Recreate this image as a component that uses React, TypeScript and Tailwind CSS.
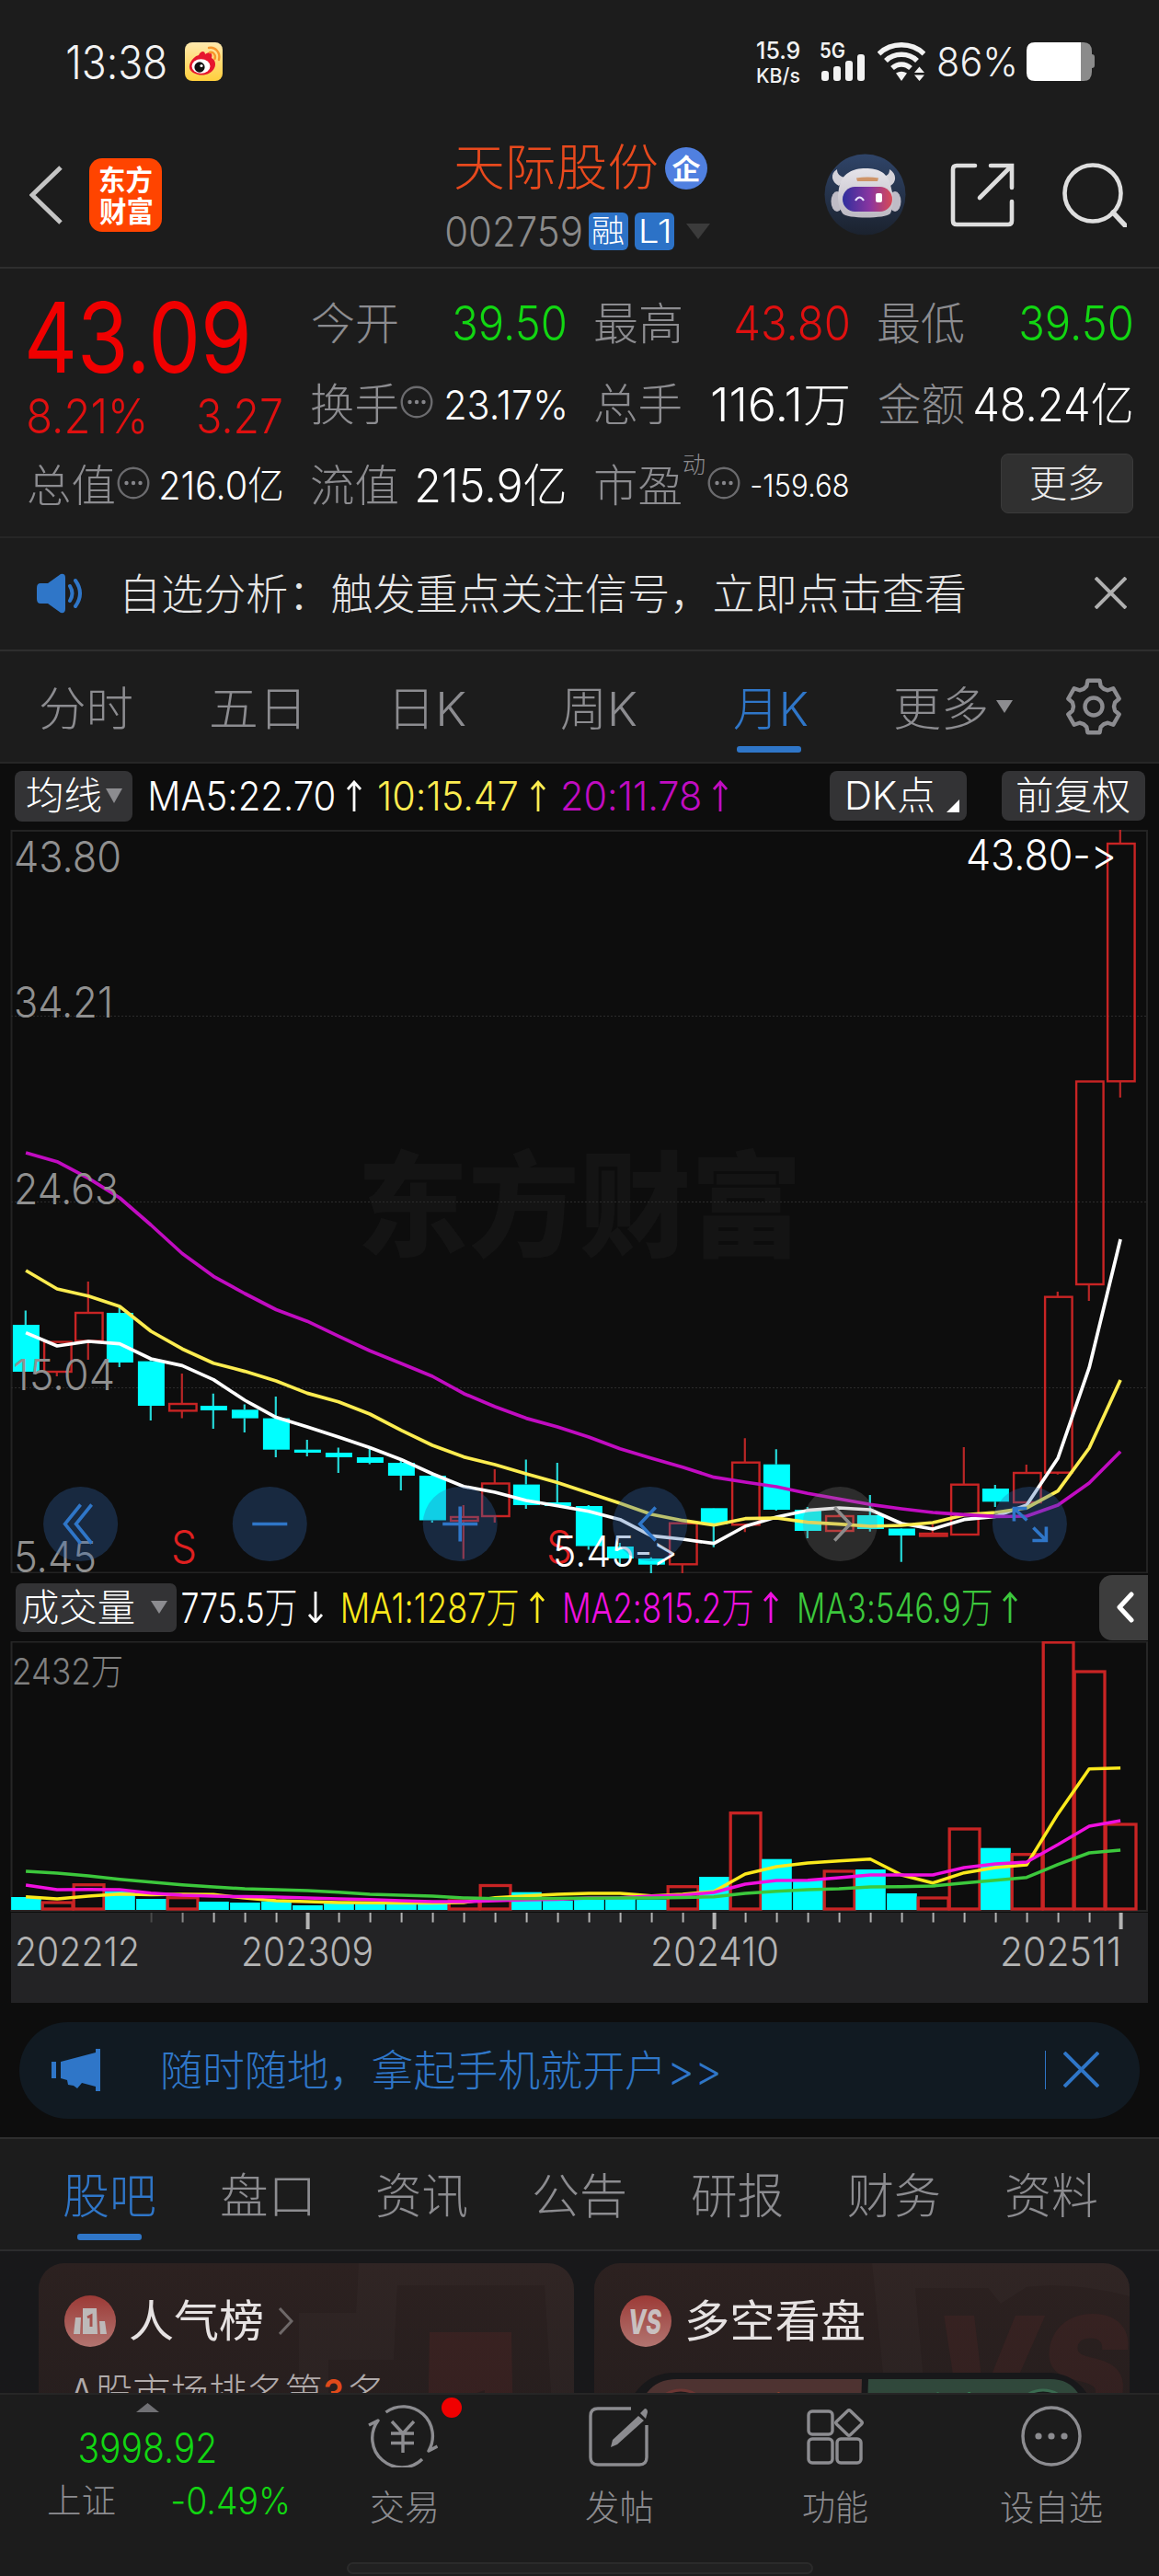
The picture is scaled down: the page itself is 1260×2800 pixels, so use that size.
import React, { useLayoutEffect, useRef, useState } from "react";

const FONT = "font-['Inter','Noto_Sans_CJK_SC',sans-serif]";

/* Text whose ink is stretched to fill the width of its box. */
function Fit({ className = "", children }: { className?: string; children: string }) {
  const ref = useRef<HTMLDivElement>(null);
  const [transform, setTransform] = useState("none");
  useLayoutEffect(() => {
    const el = ref.current;
    const ctx = document.createElement("canvas").getContext("2d");
    if (!el || !ctx) return;
    const cs = getComputedStyle(el);
    ctx.font = `${cs.fontStyle} ${cs.fontWeight} ${cs.fontSize} ${cs.fontFamily}`;
    const m = ctx.measureText(children);
    const ink = m.actualBoundingBoxLeft + m.actualBoundingBoxRight;
    const s = el.clientWidth / ink;
    setTransform(`translateX(${m.actualBoundingBoxLeft * s}px) scaleX(${s})`);
  }, [children]);
  return (
    <div ref={ref} className={`shrink-0 whitespace-nowrap leading-none ${className}`}>
      <span className="inline-block origin-left" style={{ transform }}>{children}</span>
    </div>
  );
}

function Dots() {
  return (
    <svg viewBox="0 0 36 36" className="h-9 w-9 shrink-0" fill="none" stroke="#6b6b6e" strokeWidth="2.4">
      <circle cx="18" cy="18" r="16.3" />
      <g fill="#85858a" stroke="none"><circle cx="10.5" cy="18" r="2.2" /><circle cx="18" cy="18" r="2.2" /><circle cx="25.5" cy="18" r="2.2" /></g>
    </svg>
  );
}

function StatusBar() {
  return (
    <div className="flex h-[134px] items-center text-[#f2f2f2]">
      <Fit className="ml-[73px] mt-[2px] w-[107px] text-[50px] font-[360]">13:38</Fit>
      <svg viewBox="0 0 41 42" className="ml-[21px] h-[42px] w-[41px]">
        <defs><linearGradient id="wb" x1="0" y1="0" x2="0" y2="1"><stop offset="0" stopColor="#ffe9ae" /><stop offset="1" stopColor="#ffcf3c" /></linearGradient></defs>
        <rect width="41" height="42" rx="8" fill="url(#wb)" />
        <path d="M15 14 C17 9 22 9 22 13 C26 10 31 11 29 17 C33 19 34 24 32 28 C29 34 21 37 14 35 C6 33 3 28 6 22 C8 18 11 15 15 14Z" fill="#e6162d" />
        <ellipse cx="17.5" cy="26" rx="10" ry="7.8" fill="#fff" />
        <ellipse cx="16" cy="27" rx="5.6" ry="5.8" fill="#111" />
        <circle cx="18" cy="25.5" r="1.6" fill="#fff" />
        <path d="M27 11 C31 10 34 14 32.5 18 M26 6 C33 4.500 39 11 37 19" fill="none" stroke="#f7952b" strokeWidth="2.4" strokeLinecap="round" />
      </svg>
      <div className="ml-auto flex w-[47px] flex-col gap-[3px] font-medium">
        <Fit className="w-[46px] text-[26px]">15.9</Fit>
        <Fit className="w-[46px] text-[22px]">KB/s</Fit>
      </div>
      <div className="ml-[21px] h-[42px] w-[52px]">
        <svg viewBox="0 0 52 42" className="h-[42px] w-[52px]" fill="#f2f2f2">
          <text x="0" y="17" fontSize="23" fontWeight="600" textLength="28" lengthAdjust="spacingAndGlyphs">5G</text>
          <rect x="2" y="31" width="8" height="11" rx="3" /><rect x="15" y="26" width="8" height="16" rx="3" /><rect x="28" y="20" width="8" height="22" rx="3" /><rect x="41" y="13" width="8" height="29" rx="3" />
        </svg>
      </div>
      <svg viewBox="0 0 52 42" className="ml-[11px] h-[42px] w-[52px]" fill="none" stroke="#f2f2f2" strokeWidth="5.500">
        <path d="M1.500 12.500 C15 -0.500 37 -0.500 50.500 12.500" />
        <path d="M9 20 C18 11 34 11 43 20" />
        <path d="M16 28 C22 22.500 30 22.500 36 28" />
        <path d="M20 33.500 Q26 30 32 33.500 L26 42Z" fill="#f2f2f2" stroke="none" />
        <path d="M40 33 L45.500 26.500 L51 33Z M40 35.500 L51 35.500 L45.500 42Z" fill="#f2f2f2" stroke="none" />
      </svg>
      <Fit className="ml-[14px] w-[83px] text-[44px] font-[360]">86%</Fit>
      <svg viewBox="0 0 74 42" className="ml-[13px] mr-[70px] h-[42px] w-[74px]">
        <path d="M58 0H62Q71 0 71 10V13Q74 13 74 16V25Q74 28 71 28V32Q71 42 62 42H58Z" fill="#8b8b8b" />
        <path d="M9 0H59V42H9Q0 42 0 33V9Q0 0 9 0Z" fill="#fff" />
      </svg>
    </div>
  );
}

function Robot() {
  return (
    <svg viewBox="11 7 89 89" className="h-[89px] w-[89px] shrink-0">
      <defs>
        <linearGradient id="sky" x1="0" y1="0" x2="0" y2="1"><stop offset="0" stopColor="#2f4468" /><stop offset="1" stopColor="#1b222e" /></linearGradient>
        <linearGradient id="visor" x1="0" y1="0" x2="1" y2="0"><stop offset="0" stopColor="#2f2f9d" /><stop offset=".55" stopColor="#8a35a0" /><stop offset="1" stopColor="#d84a55" /></linearGradient>
        <linearGradient id="shell" x1="0" y1="0" x2="0" y2="1"><stop offset="0" stopColor="#e6e4ea" /><stop offset="1" stopColor="#bcb9c2" /></linearGradient>
      </defs>
      <circle cx="55.500" cy="51.500" r="44" fill="url(#sky)" />
      <path d="M25 24 C17 29 19 38 27 42 L34 33 C28 32 25 29 25 24Z M82 24 C90 29 90 38 83 42 L75 32 C80 31 82 29 82 24Z" fill="#d5d3da" />
      <ellipse cx="25" cy="59" rx="6.500" ry="11" fill="#bfbcc6" /><ellipse cx="88" cy="59" rx="6.500" ry="11" fill="#bfbcc6" />
      <path d="M27 45 C30 28 42 23 56 23 C70 23 81 27 84 45 C87 55 86 66 83 72 C78 78 35 78 31 72 C26 64 25 55 27 45Z" fill="url(#shell)" />
      <rect x="31" y="43" width="54" height="27" rx="13.500" fill="url(#visor)" />
      <path d="M46 33.500 Q58 31.500 70 33.500 L69 37 H47Z" fill="#cf9468" />
      <path d="M45 58 Q49.500 51 54 58" fill="none" stroke="#e9e3ff" strokeWidth="2.200" />
      <rect x="67" y="50" width="7" height="10" rx="2" fill="#fff" />
    </svg>
  );
}

function Header() {
  return (
    <div className="flex h-[156px] items-start">
      <svg viewBox="0 0 36 64" className="ml-[32px] mt-[46px] h-[64px] w-[36px]" fill="none" stroke="#c4c4c4" strokeWidth="5"><path d="M34 2 L3 32 L34 62" /></svg>
      <div className="ml-[29px] mt-[38px] flex h-[80px] w-[79px] flex-col items-center justify-center gap-[3px] rounded-[14px] bg-[#ff4400] font-bold text-white">
        <Fit className="w-[57px] text-[31px]">东方</Fit>
        <Fit className="w-[57px] text-[31px]">财富</Fit>
      </div>
      <div className="ml-[309px] mt-[24px] flex w-[290px] flex-col">
        <div className="flex h-[50px] items-center">
          <Fit className="ml-[10px] w-[219px] text-[54px] font-light text-[#e8491d]">天际股份</Fit>
          <div className="ml-[9px] flex h-[46px] w-[46px] items-center justify-center rounded-full bg-[#5080e0] text-[31px] font-bold leading-none text-white">企</div>
        </div>
        <div className="mt-[22px] flex h-[42px] items-center">
          <Fit className="w-[147px] text-[45px] font-light text-[#8a8a8a]">002759</Fit>
          <div className="ml-[8px] flex h-[41px] w-[43px] items-center justify-center rounded-[6px] bg-[#2c72c7]"><Fit className="w-[33px] text-[34px] font-light text-white">融</Fit></div>
          <div className="ml-[7px] flex h-[41px] w-[43px] items-center justify-center rounded-[6px] bg-[#2c72c7]"><Fit className="w-[30px] text-[36px] font-light text-white">L1</Fit></div>
          <svg viewBox="0 0 26 17" className="ml-[13px] h-[17px] w-[26px]"><path d="M0 0H26L13 17Z" fill="#3b3b3b" /></svg>
        </div>
      </div>
      <div className="ml-auto mr-[35px] mt-[33px] flex h-[89px] items-center">
        <Robot />
        <svg viewBox="0 0 70 70" className="ml-[48px] h-[70px] w-[70px]" fill="none" stroke="#dedede" strokeWidth="4.600">
          <path d="M27 3H7Q3 3 3 7V63Q3 67 7 67H63Q67 67 67 63V42" strokeLinecap="round" /><path d="M44 3H67V27 M66 4L32 38" strokeLinecap="round" />
        </svg>
        <svg viewBox="0 0 70 70" className="ml-[52px] h-[70px] w-[70px]" fill="none" stroke="#dedede" strokeWidth="4.600">
          <circle cx="33" cy="33" r="30.500" /><path d="M55 54L68 68" strokeWidth="5.500" strokeLinecap="round" />
        </svg>
      </div>
    </div>
  );
}

const LABEL = "w-[93px] text-[48px] font-light text-[#8c8c90]";
const RED = "text-[#e01010]";
const GREEN = "text-[#12d612]";

function Cell({ children }: { children: React.ReactNode }) {
  return <div className="flex items-center">{children}</div>;
}

function Quote() {
  return (
    <div className="h-[293px] border-t-2 border-[#2e2e2e] pl-[31px] pr-[30px] pt-[16px]">
      <div className="grid grid-cols-4 grid-rows-[88px_88px_88px] gap-x-[33px]">
        <div className="row-span-2 flex flex-col">
          <div className="flex h-[117px] items-center"><Fit className="w-[238px] text-[106px] font-[430] text-[#f00000]">43.09</Fit></div>
          <div className="flex h-[55px] items-center justify-between"><Fit className={`w-[126px] text-[52px] font-light ${RED}`}>8.21%</Fit><Fit className={`w-[90px] text-[52px] font-light ${RED}`}>3.27</Fit></div>
        </div>
        <Cell><Fit className={LABEL}>今开</Fit><Fit className={`ml-auto w-[120px] text-[52px] font-light ${GREEN}`}>39.50</Fit></Cell>
        <Cell><Fit className={LABEL}>最高</Fit><Fit className={`ml-auto w-[122px] text-[52px] font-light ${RED}`}>43.80</Fit></Cell>
        <Cell><Fit className={LABEL}>最低</Fit><Fit className={`ml-auto w-[120px] text-[52px] font-light ${GREEN}`}>39.50</Fit></Cell>
        <Cell><Fit className={LABEL}>换手</Fit><div className="ml-[3px] -mt-[6px]"><Dots /></div><Fit className="ml-auto w-[129px] text-[44px] font-light text-white">23.17%</Fit></Cell>
        <Cell><Fit className={LABEL}>总手</Fit><Fit className="ml-auto w-[148px] text-[50px] font-light text-white">116.1万</Fit></Cell>
        <Cell><Fit className={LABEL}>金额</Fit><Fit className="ml-auto w-[170px] text-[50px] font-light text-white">48.24亿</Fit></Cell>
        <Cell><Fit className={LABEL}>总值</Fit><div className="ml-[3px] -mt-[6px]"><Dots /></div><Fit className="ml-auto w-[131px] text-[42px] font-light text-white">216.0亿</Fit></Cell>
        <Cell><Fit className={LABEL}>流值</Fit><Fit className="ml-auto w-[160px] text-[50px] font-light text-white">215.9亿</Fit></Cell>
        <Cell><Fit className={LABEL}>市盈</Fit><Fit className="ml-[3px] -mt-[46px] w-[23px] text-[25px] font-light text-[#8c8c90]">动</Fit><div className="ml-[3px] -mt-[6px]"><Dots /></div><Fit className="ml-auto w-[105px] text-[34px] font-light text-white">-159.68</Fit></Cell>
        <div className="-mr-[2px] flex items-center justify-end pb-[5px]">
          <div className="flex h-[65px] w-[144px] items-center justify-center rounded-[8px] border border-[#3a3a3a] bg-[#303030]"><Fit className="w-[78px] text-[41px] font-light text-[#ececec]">更多</Fit></div>
        </div>
      </div>
    </div>
  );
}

function Notice() {
  return (
    <div className="flex h-[123px] items-center border-t-2 border-[#262626] pb-[2px]">
      <svg viewBox="0 0 52 44" className="ml-[40px] h-[44px] w-[52px]" fill="#2f76c8">
        <path d="M4 11H12L26 1Q31 0 31 5V39Q31 44 26 43L12 33H4Q0 33 0 28V16Q0 11 4 11Z" />
        <path d="M36 14Q41 22 36 30 M42 8Q52 22 42 36" fill="none" stroke="#2f76c8" strokeWidth="4" strokeLinecap="round" />
      </svg>
      <Fit className="ml-[45px] w-[912px] text-[46px] font-light text-[#e6e6e6]">自选分析：触发重点关注信号，立即点击查看</Fit>
      <svg viewBox="0 0 35 35" className="ml-auto mr-[35px] h-[35px] w-[35px]" stroke="#b0b0b0" strokeWidth="4"><path d="M1 1L34 34M34 1L1 34" /></svg>
    </div>
  );
}

function gearPath() {
  const p: string[] = [];
  for (let k = 0; k < 6; k++) {
    for (const [da, r] of [[-19, 23.5], [-13, 29], [13, 29], [19, 23.5], [30, 22]]) {
      const a = ((-90 + 60 * k + da) * Math.PI) / 180;
      p.push(`${(31 + r * Math.cos(a)).toFixed(1)},${(31 + r * Math.sin(a)).toFixed(1)}`);
    }
  }
  return p.join(" ");
}

function PeriodTabs() {
  const c = "text-[51px] font-light text-[#8c8c90]";
  return (
    <div className="flex h-[122px] items-start border-t-2 border-[#2e2e2e] pt-[37px]">
      <Fit className={`ml-[44px] w-[99px] ${c}`}>分时</Fit>
      <Fit className={`ml-[86px] w-[96px] ${c}`}>五日</Fit>
      <Fit className={`ml-[105px] w-[76px] ${c}`}>日K</Fit>
      <Fit className={`ml-[104px] w-[82px] ${c}`}>周K</Fit>
      <div className="ml-[106px] flex w-[80px] flex-col items-center">
        <Fit className="w-[80px] text-[51px] font-light text-[#2f76c8]">月K</Fit>
        <div className="mr-[4px] mt-[15px] h-[7px] w-[70px] rounded-[3px] bg-[#2f76c8]" />
      </div>
      <Fit className={`ml-[95px] w-[99px] ${c}`}>更多</Fit>
      <svg viewBox="0 0 18 14" className="ml-[11px] mt-[16px] h-[14px] w-[18px]"><path d="M0 0H18L9 14Z" fill="#8c8c90" /></svg>
      <svg viewBox="0 0 62 62" className="-mt-[8px] ml-[57px] h-[62px] w-[62px]" fill="none" stroke="#8c8c90" strokeWidth="4.400" strokeLinejoin="round">
        <polygon points={gearPath()} /><circle cx="31" cy="31" r="9.500" />
      </svg>
    </div>
  );
}

function Arrow({ className, down }: { className: string; down?: boolean }) {
  return (
    <svg viewBox="0 0 18 34" className={`h-[34px] w-[18px] shrink-0 ${className}`} fill="none" stroke="currentColor" strokeWidth="2.800">
      <path d={down ? "M9 0V33M2 25L9 33L16 25" : "M9 34V2M2 10L9 2L16 10"} />
    </svg>
  );
}

function MaRow() {
  return (
    <div className="flex h-[74px] items-center border-t-2 border-[#262626] bg-[#0d0d0d] pb-[2px]">
      <div className="ml-[16px] flex h-[55px] w-[128px] items-center rounded-[8px] bg-[#333335]">
        <Fit className="ml-[13px] w-[81px] text-[42px] font-light text-white">均线</Fit>
        <svg viewBox="0 0 18 16" className="ml-[5px] h-[16px] w-[18px]"><path d="M0 0H18L9 16Z" fill="#8c8c90" /></svg>
      </div>
      <Fit className="ml-[20px] w-[199px] text-[43px] font-light text-white">MA5:22.70</Fit>
      <Arrow className="ml-[13px] text-white" />
      <Fit className="ml-[18px] w-[150px] text-[43px] font-light text-[#fcec50]">10:15.47</Fit>
      <Arrow className="ml-[14px] text-[#fcec50]" />
      <Fit className="ml-[18px] w-[149px] text-[43px] font-light text-[#c10cc1]">20:11.78</Fit>
      <Arrow className="ml-[13px] text-[#c10cc1]" />
      <div className="ml-auto flex h-[54px] w-[149px] items-center rounded-[8px] bg-[#333335]">
        <Fit className="ml-[20px] w-[93px] text-[42px] font-light text-white">DK点</Fit>
        <svg viewBox="0 0 14 14" className="ml-[14px] mt-[22px] h-[14px] w-[14px]"><path d="M14 0V14H0Z" fill="#fff" /></svg>
      </div>
      <div className="ml-[38px] mr-[15px] flex h-[54px] w-[156px] items-center justify-center rounded-[8px] bg-[#333335]">
        <Fit className="w-[122px] text-[42px] font-light text-white">前复权</Fit>
      </div>
    </div>
  );
}

const X0 = 28.1;
const STEP = 34;
const cx = (i: number) => X0 + i * STEP;

/* rising?, wick top, body top, body bottom, wick bottom */
const CANDLES: [number, number, number, number, number][] = [
  [0, 1424.5, 1440, 1491, 1491], [1, 1458.6, 1458.6, 1491, 1496], [1, 1393, 1427, 1457.6, 1478], [0, 1421, 1427, 1481, 1486],
  [0, 1477, 1479.6, 1528, 1544], [1, 1493, 1526, 1533.4, 1541.6], [0, 1514.7, 1528, 1533, 1553], [0, 1526.5, 1532.3, 1541.6, 1557],
  [0, 1518, 1541.6, 1575.7, 1584], [0, 1565, 1575.7, 1579, 1583], [0, 1573.6, 1579, 1584, 1601], [0, 1572.6, 1584, 1590, 1591.5],
  [0, 1588, 1590, 1604, 1620], [0, 1600, 1604, 1652.5, 1655], [1, 1636, 1649, 1653, 1694.5], [1, 1597, 1612.5, 1648, 1655],
  [0, 1586.4, 1613.6, 1636, 1640], [0, 1590, 1633, 1637, 1637], [0, 1636, 1637, 1680.5, 1684.5], [0, 1677, 1681, 1694, 1703],
  [0, 1692.7, 1694, 1700.7, 1710], [1, 1655.7, 1655.7, 1700.3, 1711], [0, 1639, 1639.3, 1656.7, 1681.7], [1, 1563.3, 1589.7, 1657.3, 1665.3],
  [0, 1575.3, 1591.7, 1641, 1642], [0, 1638, 1641, 1664, 1672], [1, 1646, 1648, 1664, 1664], [0, 1625, 1647, 1662, 1664.7],
  [0, 1661, 1661.5, 1669, 1697.7], [1, 1656.7, 1667, 1669.5, 1670], [1, 1573, 1613.7, 1668, 1668], [0, 1614, 1618, 1632.3, 1638],
  [1, 1592, 1601, 1633, 1633], [1, 1404, 1409.7, 1600.7, 1602.7], [1, 1175.5, 1175.5, 1396, 1414], [1, 902, 917, 1175.300, 1193],
];
const MA5 = [1448.6, 1463, 1458, 1460.7, 1477, 1484.4, 1499.6, 1522, 1540.6, 1551, 1562, 1573.6, 1586.4, 1602, 1615.7, 1622, 1631, 1636.7, 1642.7, 1651.7, 1669.3, 1673, 1677.7, 1659, 1649, 1641.7, 1639, 1641, 1656, 1662, 1651.7, 1648.3, 1636, 1585, 1486.7, 1347];
const MA10 = [1381, 1401, 1408.7, 1420, 1447, 1466.2, 1481.7, 1490.6, 1501, 1514.4, 1523.7, 1537, 1554.7, 1571, 1583.6, 1592, 1602, 1611.5, 1622.7, 1634, 1646, 1652.7, 1657.7, 1650.7, 1650, 1654.7, 1656.7, 1659, 1658, 1655, 1646.7, 1644, 1639, 1620.7, 1574, 1500];
const MA20 = [1253, 1262.7, 1280.6, 1302, 1331.5, 1362.5, 1387.3, 1406, 1423.5, 1436.2, 1452.4, 1468.3, 1482, 1496, 1514.7, 1529, 1541.6, 1551, 1562, 1574.7, 1585, 1594.7, 1605.7, 1611, 1616, 1623.3, 1629.3, 1635.3, 1640, 1644, 1646.3, 1648.3, 1648, 1636, 1612, 1577.7];
const VOL = [2062, 2068, 2048.7, 2055.7, 2064, 2062.7, 2067, 2068, 2066.7, 2071, 2069, 2069.3, 2069.6, 2069.3, 2066, 2049.5, 2056.7, 2066, 2065, 2064, 2064.7, 2050.7, 2040, 1970.7, 2020.7, 2043, 2034, 2032, 2058, 2063, 1988, 2008.7, 2015.7, 1785, 1817, 1983];
const V1 = [2061.7, 2064, 2061, 2058.7, 2059.5, 2059, 2059.3, 2063, 2066, 2067, 2068, 2068.3, 2068.6, 2068.6, 2068, 2062.7, 2060.7, 2059, 2058, 2058, 2060.7, 2059, 2056, 2037, 2029, 2025, 2022.7, 2020.7, 2038, 2046.7, 2035.7, 2030, 2027, 1971.7, 1922.7, 1921.7];
const V2 = [2049, 2054, 2053.7, 2054, 2057.7, 2060, 2061, 2061.6, 2062, 2063, 2064, 2064.7, 2066, 2067, 2067, 2066, 2065, 2064.600, 2063, 2062.7, 2061, 2060, 2057, 2048, 2044, 2043.7, 2041, 2038, 2038, 2038, 2030, 2026, 2024, 2005, 1985, 1979];
const V3 = [2034, 2036, 2039, 2042.7, 2045.7, 2048.7, 2051, 2053, 2054, 2055, 2056.7, 2059, 2060, 2061, 2063, 2063.7, 2063.7, 2063.500, 2063.300, 2063, 2063, 2062.500, 2061.7, 2058, 2055.7, 2054, 2053, 2051, 2050.7, 2050, 2046.7, 2043.7, 2040.7, 2026.7, 2014, 2011];
const line = (ys: number[]) => ys.map((y, i) => `${cx(i)},${y}`).join(" ");

function Label({ x, y, w, size, fill, weight = 300, children }: { x: number; y: number; w: number; size: number; fill: string; weight?: number; children: string }) {
  return <text x={x} y={y} fontSize={size} fill={fill} fontWeight={weight} textLength={w} lengthAdjust="spacingAndGlyphs">{children}</text>;
}

function PriceChart() {
  const buttons: [number, boolean, string][] = [
    [87.6, true, "M0 -21L-17 0L0 21M12 -21L-5 0L12 21"],
    [293.3, true, "M-19 0H19"],
    [500.2, true, "M-19 0H19M0 -19V19"],
    [706.7, true, "M6 -18L-11 0L6 18"],
    [913.3, false, "M-6 -18L11 0L-6 18"],
    [1119.4, true, "M-17 -3V-17H-3M-17 -17L-3 -4M4 4L18 18M18 3V18H3"],
  ];
  return (
    <svg viewBox="0 902 1260 808" className="block h-[808px] w-[1260px] bg-[#0d0d0d]" fill="none">
      <text x="388" y="1356" fontSize="124" fontWeight="900" fill="#141414" textLength="484" lengthAdjust="spacingAndGlyphs">东方财富</text>
      <path d="M12 903H1248M12.500 902V1710M1247 902V1710M12 1709.500H1248" stroke="#232323" strokeWidth="2" />
      <path d="M12 1104.500H1248M12 1306.500H1248M12 1508.500H1248" stroke="#2c2c2c" strokeWidth="1" strokeDasharray="2 2" />
      {CANDLES.map(([up, wt, bt, bb, wb], i) => {
        const c = up ? "#c82424" : "#00ffff";
        return (
          <g key={i} stroke={c}>
            <path d={`M${cx(i) - 0.3} ${wt}V${bt}M${cx(i) - 0.3} ${bb}V${wb}`} strokeWidth="2.200" stroke={up ? "#b82626" : "#25d8d8"} />
            {up ? <rect x={cx(i) - 14} y={bt} width="29.500" height={bb - bt} strokeWidth="2.400" /> : <rect x={cx(i) - 14.2} y={bt} width="29" height={bb - bt} fill={c} stroke="none" />}
          </g>
        );
      })}
      <g strokeWidth="3.700" strokeLinejoin="round">
        <polyline points={line(MA5)} stroke="#fff" />
        <polyline points={line(MA10)} stroke="#fcec50" />
        <polyline points={line(MA20)} stroke="#c10cc1" />
      </g>
      <Label x={15} y={948} w={117} size={47} fill="#909090">43.80</Label>
      <Label x={15} y={1106} w={108} size={47} fill="#909090">34.21</Label>
      <Label x={15} y={1309} w={114} size={47} fill="#909090">24.63</Label>
      <Label x={14} y={1511} w={111} size={47} fill="#909090">15.04</Label>
      <Label x={15} y={1709} w={90} size={47} fill="#909090">5.45</Label>
      <Label x={186} y={1699} w={28} size={49} fill="#e02020" weight={360}>S</Label>
      <Label x={594} y={1699} w={28} size={49} fill="#e02020" weight={360}>S</Label>
      <Label x={1050} y={946} w={164} size={47} fill="#ffffff">43.80-&gt;</Label>
      <Label x={601} y={1703} w={136} size={47} fill="#ffffff">5.45-&gt;</Label>
      {buttons.map(([x, on, d]) => (
        <g key={x} transform={`translate(${x} 1656.500)`}>
          <circle r="40.500" fill={on ? "#3268af" : "#888888"} fillOpacity={on ? 0.32 : 0.26} />
          <path d={d} stroke={on ? "#2f76c8" : "#8c8c8c"} strokeWidth="3.600" />
        </g>
      ))}
    </svg>
  );
}

function VolRow() {
  return (
    <div className="flex h-[74px] items-center bg-[#0d0d0d]">
      <div className="ml-[17px] flex h-[53px] w-[175px] items-center rounded-[7px] bg-[#333335]">
        <Fit className="ml-[7px] w-[122px] text-[41px] font-light text-white">成交量</Fit>
        <svg viewBox="0 0 18 14" className="ml-[18px] h-[14px] w-[18px]"><path d="M0 0H18L9 14Z" fill="#8c8c90" /></svg>
      </div>
      <Fit className="ml-[6px] w-[124px] text-[45px] font-light text-white">775.5万</Fit>
      <Arrow down className="ml-[12px] text-white" />
      <Fit className="ml-[21px] w-[190px] text-[45px] font-light text-[#fbe91c]">MA1:1287万</Fit>
      <Arrow className="ml-[12px] text-[#fbe91c]" />
      <Fit className="ml-[21px] w-[204px] text-[45px] font-light text-[#f010e0]">MA2:815.2万</Fit>
      <Arrow className="ml-[11px] text-[#f010e0]" />
      <Fit className="ml-[22px] w-[209px] text-[45px] font-light text-[#3cc83c]">MA3:546.9万</Fit>
      <Arrow className="ml-[11px] text-[#3cc83c]" />
      <div className="ml-auto mr-[12px] flex h-[71px] w-[53px] items-center justify-center rounded-l-[14px] bg-[#3d3d3d]">
        <svg viewBox="0 0 20 34" className="ml-[2px] h-[34px] w-[20px]" fill="none" stroke="#fff" strokeWidth="5" strokeLinecap="round" strokeLinejoin="round"><path d="M17 3L4 17L17 31" /></svg>
      </div>
    </div>
  );
}

function VolumeChart() {
  return (
    <svg viewBox="0 1784 1260 393" className="block h-[393px] w-[1260px] bg-[#0d0d0d]" fill="none">
      <path d="M12 1784.500H1248M12.500 1784V2078M1247 1784V2078M12 2077H1248" stroke="#262626" strokeWidth="2" />
      {VOL.map((y, i) =>
        CANDLES[i][0] ? <rect key={i} x={cx(i) - 15.900} y={y} width="32.800" height={2075 - y} stroke="#c82424" strokeWidth="3.300" /> : <rect key={i} x={cx(i) - 16} y={y} width="32.700" height={2076 - y} fill="#00ffff" />
      )}
      <g strokeWidth="3.500" strokeLinejoin="round">
        <polyline points={line(V1)} stroke="#fbe91c" />
        <polyline points={line(V2)} stroke="#f010e0" />
        <polyline points={line(V3)} stroke="#3cc83c" />
      </g>
      <Label x={13} y={1831} w={121} size={40} fill="#808080">2432万</Label>
      <rect x="12" y="2079" width="1236" height="98" fill="#232325" />
      {VOL.map((_, i) => {
        if (i < 4) return null;
        const major = i === 9 || i === 22 || i === 35;
        return <rect key={i} x={cx(i) + (major ? -1.500 : -0.500)} y="2079" width={major ? 4 : 2} height={major ? 18 : 10.500} fill={i === 4 ? "#4a4a4a" : i === 5 ? "#8a8a8a" : "#b4b4b4"} />;
      })}
      <Label x={16} y={2136.500} w={136} size={43.5} fill="#b4b4b4">202212</Label>
      <Label x={262} y={2136.500} w={144} size={43.5} fill="#b4b4b4">202309</Label>
      <Label x={707} y={2136.500} w={140} size={43.5} fill="#b4b4b4">202410</Label>
      <Label x={1087} y={2136.500} w={132} size={43.5} fill="#b4b4b4">202511</Label>
    </svg>
  );
}

function Banner() {
  return (
    <div className="h-[146px] bg-[#0d0d0d] px-[21px] pt-[21px]">
      <div className="flex h-[105px] items-center rounded-full bg-[#111a22] pb-[2px]">
        <svg viewBox="0 0 53 46" className="ml-[35px] h-[46px] w-[53px]" fill="#2f76c8"><path d="M0 14H5V32H0Z M10 14L48 4V0H53V46H48V41L33 37L28 43L24 40L18 39L17 34L10 32Z" /></svg>
        <Fit className="ml-[68px] w-[604px] text-[46px] font-light text-[#2f76c8]">随时随地，拿起手机就开户&gt;&gt;</Fit>
        <div className="ml-auto h-[42px] w-px bg-[#2f76c8]" />
        <svg viewBox="0 0 39 39" className="ml-[19px] mr-[44px] h-[39px] w-[39px]" stroke="#2f76c8" strokeWidth="4"><path d="M1 1L38 38M38 1L1 38" /></svg>
      </div>
    </div>
  );
}

function InfoTabs() {
  return (
    <div className="flex h-[122px] justify-between border-t-2 border-[#2e2e2e] pl-[70px] pr-[68px] pt-[37px]">
      {["股吧", "盘口", "资讯", "公告", "研报", "财务", "资料"].map((t, i) => (
        <div key={t} className="flex flex-col items-center">
          <Fit className={i === 0 ? "w-[98px] text-[52px] font-light text-[#2f76c8]" : i === 1 ? "w-[96px] text-[52px] font-light text-[#8c8c90]" : "w-[98px] text-[52px] font-light text-[#8c8c90]"}>{t}</Fit>
          {i === 0 && <div className="mt-[14px] h-[7px] w-[70px] rounded-[3px] bg-[#2f76c8]" />}
        </div>
      ))}
    </div>
  );
}

function Cards() {
  return (
    <div className="flex h-[156px] gap-[22px] overflow-hidden border-t-2 border-[#2c2c2e] bg-[#18181a] pl-[42px] pt-[13px]">
      <div className="relative h-[240px] w-[582px] shrink-0 overflow-hidden rounded-[28px] bg-linear-to-b from-[#2c2120] to-[#241d1d]">
        <svg viewBox="0 0 582 240" className="absolute inset-0 h-[240px] w-[582px]">
          <path d="M348 0H582V142H557L550 24H390L386 105H315V240H283V54H345Z" fill="#ffffff" fillOpacity=".02" />
          <path d="M425 75H514L517 240H422Z" fill="#ff4040" fillOpacity=".07" />
          <path d="M365 141H407V240H363Z" fill="#ff4040" fillOpacity=".05" />
          <path d="M450 150L485 138V240H450Z" fill="#241d1d" fillOpacity=".7" />
        </svg>
        <div className="relative flex items-center pl-[28px] pt-[35px]">
          <svg viewBox="0 0 56 56" className="h-[56px] w-[56px]">
            <defs><linearGradient id="ic" x1="0" y1="0" x2="0" y2="1"><stop offset="0" stopColor="#9c3a36" /><stop offset="1" stopColor="#b27571" /></linearGradient></defs>
            <circle cx="28" cy="28" r="28" fill="url(#ic)" />
            <path d="M12 24H18L17 42H10Z M20 14H35L36 42H20Z M38 28H44L46 42H39Z" fill="#bdb9b9" />
            <path d="M25 24L29 22V34" fill="none" stroke="#a4504c" strokeWidth="3" />
          </svg>
          <Fit className="ml-[16px] w-[143px] text-[48px] font-normal text-[#e6e2e2]">人气榜</Fit>
          <svg viewBox="0 0 16 30" className="ml-[18px] h-[30px] w-[16px]" fill="none" stroke="#6e6868" strokeWidth="3"><path d="M1 1L14 15L1 29" /></svg>
        </div>
        <div className="relative flex pl-[34px] pt-[29px]">
          <Fit className="w-[273px] text-[43px] font-light text-[#b0aaaa]">A股市场排名第</Fit>
          <Fit className="ml-[4px] w-[20px] text-[43px] font-semibold text-[#e04a1a]">3</Fit>
          <Fit className="ml-[6px] w-[35px] text-[43px] font-light text-[#b0aaaa]">名</Fit>
        </div>
      </div>
      <div className="relative h-[240px] w-[582px] shrink-0 overflow-hidden rounded-[28px] bg-linear-to-b from-[#2c2120] to-[#241d1d]">
        <svg viewBox="0 0 582 240" className="absolute inset-0 h-[240px] w-[582px]">
          <path d="M302 0H582V36Q520 20 470 26L442 44L428 27H349L361 160H318Z" fill="#ffffff" fillOpacity=".02" />
          <text x="366" y="176" fontSize="164" fontWeight="900" fontStyle="italic" fill="#ff4040" fillOpacity=".06" textLength="214" lengthAdjust="spacingAndGlyphs">VS</text>
        </svg>
        <div className="relative flex items-center pl-[28px] pt-[35px]">
          <svg viewBox="0 0 56 56" className="h-[56px] w-[56px]">
            <circle cx="28" cy="28" r="28" fill="url(#ic)" />
            <text x="9" y="42" fontSize="37" fontWeight="800" fontStyle="italic" fill="#c9c0c0" textLength="36" lengthAdjust="spacingAndGlyphs">VS</text>
          </svg>
          <Fit className="ml-[17px] w-[192px] text-[48px] font-normal text-[#e6e2e2]">多空看盘</Fit>
        </div>
        <svg viewBox="0 0 520 100" className="relative ml-[30px] mt-[26px] h-[100px] w-[520px]">
          <rect x="6" y="2" width="508" height="110" rx="50" fill="#18181a" />
          <path d="M60 9H261L258 100H16V70Q16 9 60 9Z" fill="#4e3331" />
          <path d="M268 9H466Q506 9 506 70V100H265Z" fill="#30483b" />
          <circle cx="64" cy="52" r="31" fill="#1d191a" stroke="#6b3633" strokeWidth="3" /><circle cx="458" cy="52" r="31" fill="#161b19" stroke="#3a6b50" strokeWidth="3" />
          <text x="137" y="59" fontSize="42" fill="#e05a20" textLength="82" lengthAdjust="spacingAndGlyphs">看涨</text>
          <text x="312" y="59" fontSize="42" fill="#3fae68" textLength="78" lengthAdjust="spacingAndGlyphs">看跌</text>
        </svg>
      </div>
    </div>
  );
}

function BottomItem({ w, label, children }: { w: string; label: string; children: React.ReactNode }) {
  return (
    <div className="flex flex-1 flex-col items-center pt-[5px]">
      <div className="relative flex h-[80px] items-center justify-center">{children}</div>
      <Fit className={`mt-[18px] text-[38px] font-light text-[#8c8c90] ${w}`}>{label}</Fit>
    </div>
  );
}

function BottomBar() {
  const s = { fill: "none", stroke: "#8c8c90", strokeWidth: 3.4 };
  return (
    <div className="flex h-[199px] flex-col border-t-2 border-[#262626] bg-[#1c1c1c]">
      <div className="flex">
        <div className="flex w-[321px] flex-col items-center pt-[9px]">
          <svg viewBox="0 0 25 10" className="h-[10px] w-[25px]"><path d="M0 10L12.500 0L25 10Z" fill="#707074" /></svg>
          <Fit className="mt-[16px] w-[147px] text-[45px] font-light text-[#12d612]">3998.92</Fit>
          <div className="ml-[44px] mt-[15px] flex items-center self-stretch pl-[9px]">
            <Fit className="w-[72px] text-[37px] font-light text-[#8c8c90]">上证</Fit>
            <Fit className="ml-[63px] w-[124px] text-[41px] font-light text-[#12d612]">-0.49%</Fit>
          </div>
        </div>
        <BottomItem w="w-[71px]" label="交易">
          <svg viewBox="0 0 76 68" className="h-[68px] w-[76px]" {...s}>
            <path d="M19.500 8A32 32 0 0 1 66 50L75.500 45M59 59A32 32 0 0 1 11 17L1 22" strokeLinejoin="round" />
            <path d="M26 18L38 31L50 18M25 31H50M25 41.500H50M38 31V52" />
          </svg>
          <div className="absolute -right-[26px] top-[-2px] h-[22px] w-[22px] rounded-full bg-[#f00000]" />
        </BottomItem>
        <BottomItem w="w-[73px]" label="发帖">
          <svg viewBox="0 0 66 66" className="h-[66px] w-[66px]" {...s}>
            <path d="M46 3H10Q2 3 2 11V56Q2 64 10 64H55Q63 64 63 56V21" />
            <path d="M54 11L60 16L31 42L24 45L26 37Z M56 8L61 3Q64 3 64 7L62 14Z" fill="#8c8c90" stroke="none" />
          </svg>
        </BottomItem>
        <BottomItem w="w-[70px]" label="功能">
          <svg viewBox="0 0 62 62" className="h-[62px] w-[62px]" {...s}>
            <rect x="2" y="4" width="26" height="25" rx="4" /><rect x="2" y="34" width="26" height="26" rx="4" /><rect x="33" y="34" width="26" height="26" rx="4" />
            <path d="M44.500 3.500Q46 2 47.500 3.500L59.500 15Q61 16.500 59.500 18L47.500 29.500Q46 31 44.500 29.500L32.500 18Q31 16.500 32.500 15Z" />
          </svg>
        </BottomItem>
        <BottomItem w="w-[110px]" label="设自选">
          <svg viewBox="0 0 66 66" className="h-[66px] w-[66px]" {...s}>
            <circle cx="33" cy="33" r="31" /><g fill="#8c8c90" stroke="none"><circle cx="19" cy="33" r="3.600" /><circle cx="33" cy="33" r="3.600" /><circle cx="47" cy="33" r="3.600" /></g>
          </svg>
        </BottomItem>
      </div>
      <div className="mx-auto mb-[2px] mt-auto h-[13px] w-[507px] rounded-full border-2 border-[#2b2b2b] bg-[#212121]" />
    </div>
  );
}

export default function App() {
  return (
    <div className={`flex h-[2800px] w-[1260px] flex-col overflow-hidden bg-[#1c1c1c] [font-feature-settings:'calt'_0] ${FONT}`}>
      <StatusBar />
      <Header />
      <Quote />
      <Notice />
      <PeriodTabs />
      <MaRow />
      <PriceChart />
      <VolRow />
      <VolumeChart />
      <Banner />
      <InfoTabs />
      <Cards />
      <BottomBar />
    </div>
  );
}
